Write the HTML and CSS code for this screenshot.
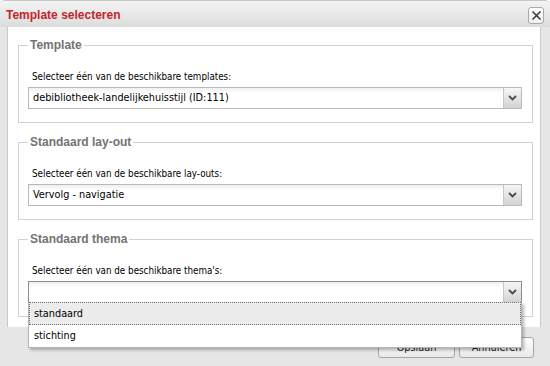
FILE: index.html
```html
<!DOCTYPE html>
<html>
<head>
<meta charset="utf-8">
<link rel="stylesheet" href="styles.css">
</head>
<body>
<div class="window">
  <div class="titlebar">
    <span class="title">Template selecteren</span>
    <span class="close"><svg width="11" height="11" viewBox="0 0 11 11"><path d="M1.5 1.5 L9.5 9.5 M9.5 1.5 L1.5 9.5" stroke="#3c3c3c" stroke-width="1.6" fill="none"/></svg></span>
  </div>
  <div class="panel">
    <fieldset class="group">
      <legend>Template</legend>
      <div class="label">Selecteer één van de beschikbare templates:</div>
      <div class="select">
        <span class="value">debibliotheek-landelijkehuisstijl (ID:111)</span>
        <span class="trigger"><svg width="9" height="6" viewBox="0 0 9 6"><path d="M1 1 L4.5 4.5 L8 1" stroke="#4a4a4a" stroke-width="1.8" fill="none"/></svg></span>
      </div>
    </fieldset>
    <fieldset class="group">
      <legend>Standaard lay-out</legend>
      <div class="label">Selecteer één van de beschikbare lay-outs:</div>
      <div class="select">
        <span class="value">Vervolg - navigatie</span>
        <span class="trigger"><svg width="9" height="6" viewBox="0 0 9 6"><path d="M1 1 L4.5 4.5 L8 1" stroke="#4a4a4a" stroke-width="1.8" fill="none"/></svg></span>
      </div>
    </fieldset>
    <fieldset class="group">
      <legend>Standaard thema</legend>
      <div class="label">Selecteer één van de beschikbare thema's:</div>
      <div class="select focused">
        <span class="value"></span>
        <span class="trigger"><svg width="9" height="6" viewBox="0 0 9 6"><path d="M1 1 L4.5 4.5 L8 1" stroke="#4a4a4a" stroke-width="1.8" fill="none"/></svg></span>
        <ul class="list">
          <li class="item active">standaard</li>
          <li class="item">stichting</li>
        </ul>
      </div>
    </fieldset>
  </div>
  <div class="footer">
    <button class="btn btn-save">Opslaan</button>
    <button class="btn btn-cancel">Annuleren</button>
  </div>
</div>
</body>
</html>
```

FILE: styles.css
```css
html, body {
  margin: 0;
  padding: 0;
  background: #ffffff;
}
.window {
  width: 550px;
  height: 366px;
  box-sizing: border-box;
  background: #e6e6e6;
  font-family: "Liberation Sans", Arial, sans-serif;
  display: flex;
  flex-direction: column;
  border-top: 1px solid #c8c8c8;
  border-radius: 5px 5px 0 0;
  overflow: hidden;
}
.titlebar {
  height: 26px;
  flex: none;
  display: flex;
  align-items: center;
  justify-content: space-between;
  padding: 0 6px 0 6px;
  background: linear-gradient(#f4f4f4, #dcdcdc);
}
.title {
  color: #c1272d;
  font-weight: bold;
  font-size: 12px;
  line-height: 14px;
  margin-top: 1px;
}
.close {
  width: 14px;
  height: 15px;
  margin-right: 0;
  margin-top: 3px;
  border: 1px solid #a9a9a9;
  border-radius: 3px;
  background: linear-gradient(#ffffff, #efefef);
  display: flex;
  align-items: center;
  justify-content: center;
}
.panel {
  flex: none;
  height: 300px;
  box-sizing: border-box;
  margin: 0 9px 0 7px;
  border-left: 1px solid #c9c9c9;
  border-right: 1px solid #c9c9c9;
  background: #ffffff;
  padding: 11px 7px 0 10px;
  position: relative;
}
.group {
  margin: 0 0 12px 0;
  padding: 0 10px 13px 9px;
  border: 1px solid #d2d2d2;
  min-width: 0;
}
.group legend {
  padding: 0 2px;
  font-size: 12px;
  line-height: 14px;
  font-weight: bold;
  color: #737373;
}
.label {
  margin: 18px 0 0 4px;
  font-family: "DejaVu Sans Condensed", "DejaVu Sans", sans-serif;
  font-size: 9.75px;
  line-height: 13px;
  color: #000000;
}
.select {
  margin-top: 4px;
  height: 22px;
  box-sizing: border-box;
  border: 1px solid #b9b9b9;
  background: linear-gradient(#efefef, #ffffff 5px);
  display: flex;
  align-items: stretch;
  position: relative;
}
.select.focused {
  border-color: #8c8c8c;
}
.value {
  flex: 1;
  padding-left: 4px;
  font-family: "DejaVu Sans Condensed", "DejaVu Sans", sans-serif;
  font-size: 10.8px;
  line-height: 20px;
  color: #000000;
  white-space: nowrap;
}
.trigger {
  width: 17px;
  flex: none;
  border-left: 1px solid #c6c6c6;
  background: linear-gradient(#f6f6f6, #d3d3d3);
  display: flex;
  align-items: center;
  justify-content: center;
}
.list {
  position: absolute;
  top: 100%;
  left: -1px;
  right: -1px;
  margin: 0;
  padding: 0;
  list-style: none;
  background: #ffffff;
  border: 1px solid #b4b4b4;
  border-top: none;
  box-shadow: 2px 2px 3px rgba(0, 0, 0, 0.28);
  z-index: 10;
}
.item {
  height: 22px;
  box-sizing: border-box;
  padding-left: 4px;
  font-family: "DejaVu Sans Condensed", "DejaVu Sans", sans-serif;
  font-size: 10.8px;
  line-height: 20px;
  color: #000000;
  border: 1px solid transparent;
}
.item.active {
  height: 23px;
  line-height: 21px;
  background: #ececec;
  border: 1px dotted #6a6a6a;
}
.footer {
  flex: 1;
  display: flex;
  justify-content: flex-end;
  align-items: flex-start;
  gap: 4px;
  padding: 10px 16px 0 0;
}
.btn {
  height: 21px;
  padding: 0;
  font-family: "DejaVu Sans Condensed", "DejaVu Sans", sans-serif;
  font-size: 10.8px;
  color: #222222;
  border: 1px solid #a6a6a6;
  border-radius: 3px;
  background: linear-gradient(#ffffff, #e9e9e9);
}
.btn-save {
  width: 77px;
}
.btn-cancel {
  width: 75px;
}
```
